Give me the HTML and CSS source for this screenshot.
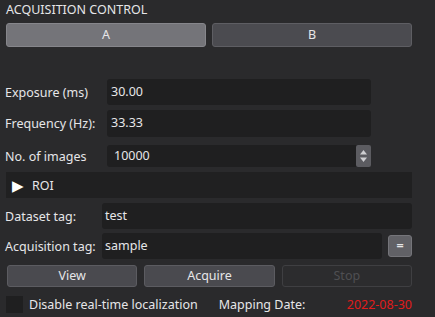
FILE: index.html
```html
<!DOCTYPE html>
<html lang="en">
<head>
    <meta charset="UTF-8">
    <title>Acquisition Control</title>
    <link rel="stylesheet" href="styles.css">
</head>
<body>
    <div class="panel">
        <div class="title">ACQUISITION CONTROL</div>
        <div class="tabs">
            <div class="tab active">A</div>
            <div class="tab">B</div>
        </div>

        <div class="row row-exposure">
            <label class="lbl lbl-wide">Exposure (ms)</label>
            <div class="field short">30.00</div>
        </div>
        <div class="row row-freq">
            <label class="lbl lbl-wide">Frequency (Hz):</label>
            <div class="field short">33.33</div>
        </div>
        <div class="row row-images">
            <label class="lbl lbl-wide">No. of images</label>
            <div class="field short spin">
                <span class="spin-val">10000</span>
                <span class="spin-btn">
                    <svg width="9" height="14" viewBox="0 0 9 14"><path d="M4.5 1 L8 5.5 L1 5.5 Z" fill="#cfcfd2"/><path d="M4.5 13 L8 8.5 L1 8.5 Z" fill="#cfcfd2"/></svg>
                </span>
            </div>
        </div>
        <div class="roi">
            <span class="arrow">&#9654;</span>
            <span>ROI</span>
        </div>
        <div class="row row-dataset">
            <label class="lbl lbl-tag">Dataset tag:</label>
            <div class="field tag">test</div>
        </div>
        <div class="row row-acq">
            <label class="lbl lbl-tag">Acquisition tag:</label>
            <div class="field tag">sample</div>
            <div class="eq-btn">=</div>
        </div>
        <div class="actions">
            <div class="btn">View</div>
            <div class="btn">Acquire</div>
            <div class="btn disabled">Stop</div>
        </div>
        <div class="footer">
            <span class="check"></span>
            <span class="check-label">Disable real-time localization</span>
            <span class="map-label">Mapping Date:</span>
            <span class="map-date">2022-08-30</span>
        </div>
    </div>
</body>
</html>
```

FILE: styles.css
```css
body {
    margin: 0;
    background-color: #2a2a2c;
    font-family: "Noto Sans", "Open Sans", sans-serif;
    font-size: 12.5px;
    color: #e6e6e8;
}
.panel {
    width: 406px;
    padding: 2px 0 0 6px;
}
.title {
    height: 16px;
    line-height: 16px;
    margin-bottom: 5px;
}
.tabs {
    display: flex;
    gap: 6px;
}
.tab {
    flex: 1;
    height: 22px;
    line-height: 22px;
    text-align: center;
    background-color: #4b4b50;
    border: 1px solid #5e5e63;
    border-radius: 3px;
}
.tab.active {
    background-color: #747479;
    border-color: #86868b;
}
.row {
    display: flex;
    align-items: center;
}
.row-exposure {
    margin-top: 32px;
}
.row-freq {
    margin-top: 5px;
    height: 27px;
}
.row-images {
    margin-top: 8px;
}
.row-dataset {
    margin-top: 5px;
}
.row-acq {
    margin-top: 4px;
}
.lbl {
    margin-left: -1px;
    flex: none;
}
.lbl-wide {
    width: 102px;
}
.lbl-tag {
    width: 97px;
}
.field {
    background-color: #1f1f20;
    border-radius: 3px;
    height: 26px;
    line-height: 26px;
    padding-left: 4px;
    box-sizing: border-box;
}
.row-freq .field {
    height: 27px;
}
.field.short {
    width: 264px;
}
.field.spin {
    height: 22px;
    line-height: 22px;
    display: flex;
    justify-content: space-between;
    padding-left: 7px;
}
.spin-btn {
    width: 15px;
    height: 22px;
    background-color: #5c5c61;
    border-radius: 2px;
    display: flex;
    align-items: center;
    justify-content: center;
}
.field.tag {
    flex: 1;
    padding-left: 3px;
}
.roi {
    margin-top: 5px;
    height: 26px;
    background-color: #202021;
    display: flex;
    align-items: center;
    gap: 8px;
    padding-left: 6px;
}
.arrow {
    font-size: 15px;
    line-height: 15px;
    color: #ffffff;
}
.eq-btn {
    flex: none;
    width: 22px;
    height: 20px;
    line-height: 20px;
    margin-left: 6px;
    text-align: center;
    background-color: #616166;
    border: 1px solid #75757a;
    border-radius: 3px;
    font-weight: bold;
}
.actions {
    display: flex;
    gap: 7px;
    margin-top: 6px;
    padding-left: 1px;
}
.btn {
    flex: 1;
    height: 20px;
    line-height: 20px;
    text-align: center;
    background-color: #4a4a4f;
    border: 1px solid #5c5c61;
    border-radius: 3px;
}
.btn.disabled {
    background-color: #2c2c2e;
    border-color: #3f3f42;
    color: #4f4f52;
}
.footer {
    display: flex;
    align-items: center;
    margin-top: 9px;
    height: 17px;
}
.check {
    width: 17px;
    height: 17px;
    background-color: #1f1f20;
    flex: none;
}
.check-label {
    margin-left: 6px;
}
.map-label {
    margin-left: 21px;
}
.map-date {
    margin-left: auto;
    color: #e01b1b;
}
```
